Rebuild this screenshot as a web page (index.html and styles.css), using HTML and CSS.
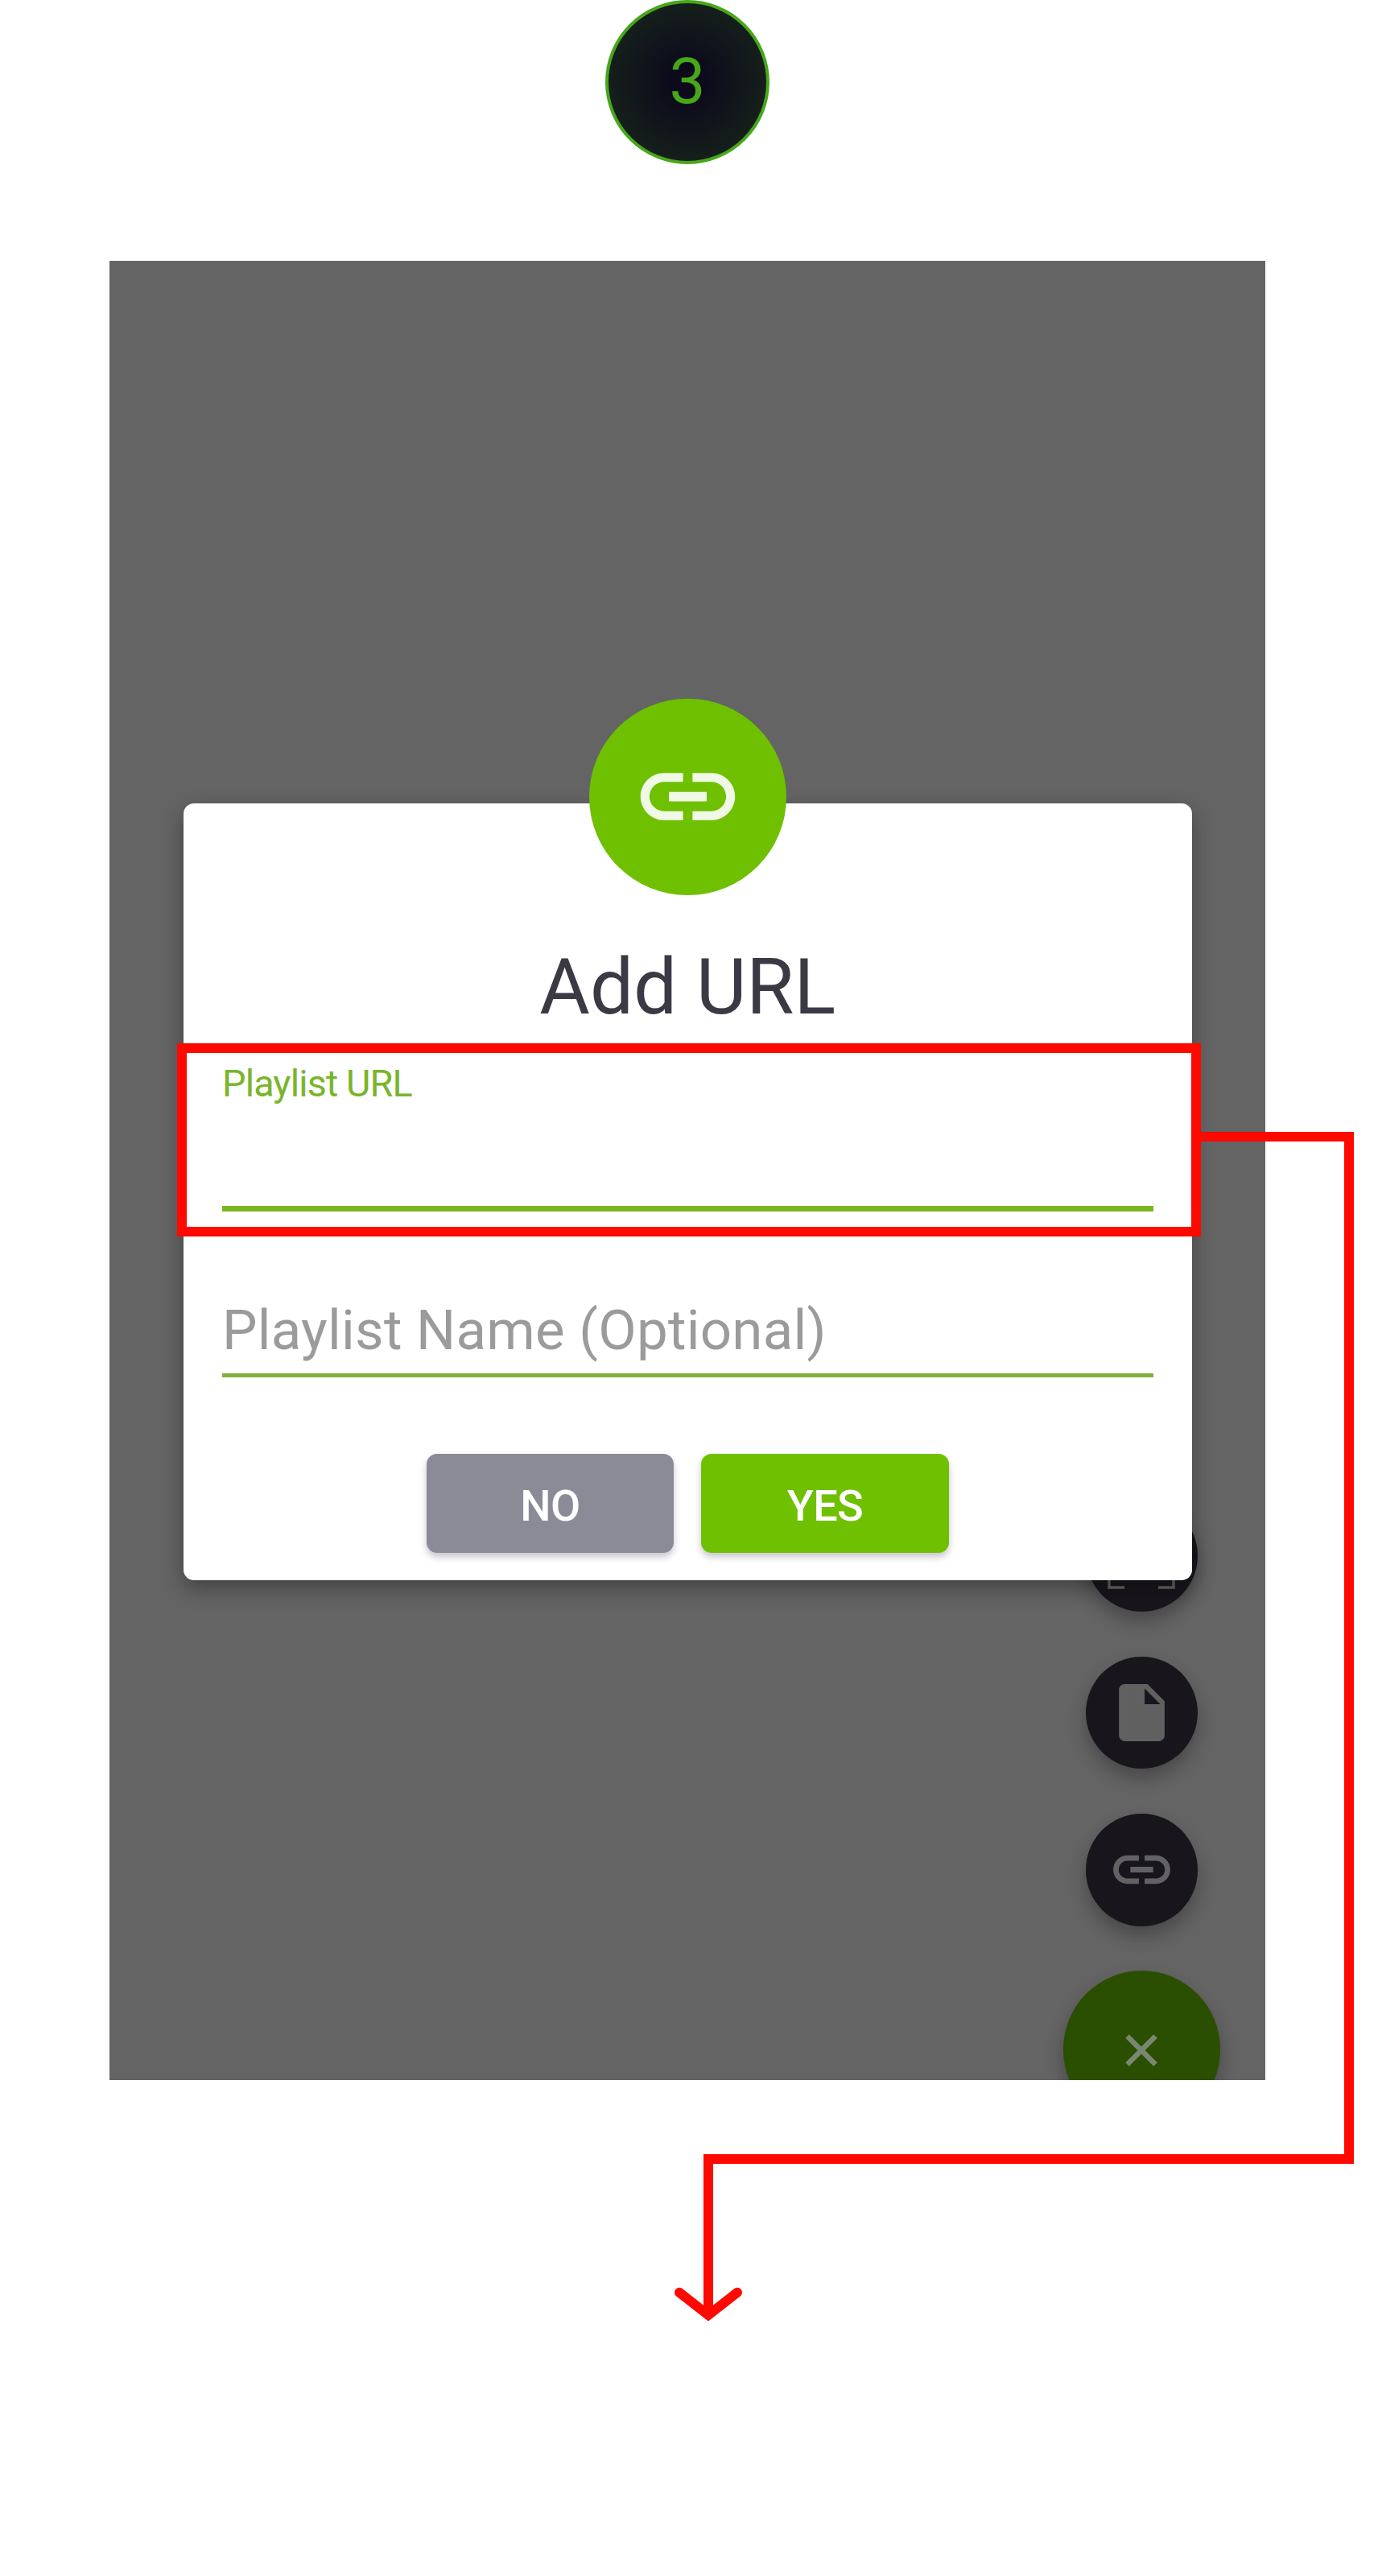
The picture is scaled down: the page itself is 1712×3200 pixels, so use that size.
FILE: index.html
```html
<!DOCTYPE html>
<html lang="en">
<head>
<meta charset="utf-8">
<title>Step 3 - Add URL</title>
<link rel="stylesheet" href="styles.css">
</head>
<body>
<main class="step">
  <div class="step-number">3</div>
  <section class="phone">
    <div class="fabs">
      <div class="fab">
        <svg width="84" height="84" viewBox="0 0 84 84" fill="none" stroke="#646464" stroke-width="3.5"><path d="M2 21V2H21M63 2H82V21M82 63V82H63M21 82H2V63"/></svg>
      </div>
      <div class="fab">
        <svg width="85" height="85" viewBox="0 0 24 24" fill="#606060"><path d="M6 2c-1.1 0-1.99.9-1.99 2L4 20c0 1.1.89 2 1.99 2H18c1.1 0 2-.9 2-2V8l-6-6H6zm7 7V3.500L18.500 9H13z"/></svg>
      </div>
      <div class="fab">
        <svg width="85" height="85" viewBox="0 0 24 24" fill="#626265"><path d="M3.900 12c0-1.710 1.390-3.100 3.100-3.100h4V7H7c-2.760 0-5 2.240-5 5s2.240 5 5 5h4v-1.900H7c-1.710 0-3.100-1.390-3.100-3.100zM8 13h8v-2H8v2zm9-6h-4v1.900h4c1.710 0 3.100 1.390 3.100 3.100s-1.390 3.100-3.100 3.100h-4V17h4c2.760 0 5-2.240 5-5s-2.240-5-5-5z"/></svg>
      </div>
      <div class="fab fab-main">
        <svg width="40" height="40" viewBox="0 0 40 40" stroke="#788672" stroke-width="6.500"><path d="M2.500 2.500 37.500 37.500M37.500 2.500 2.500 37.500"/></svg>
      </div>
    </div>
    <form class="dialog">
      <div class="dialog-icon">
        <svg width="141" height="141" viewBox="0 0 24 24" fill="#f0f9e5"><path d="M3.900 12c0-1.710 1.390-3.100 3.100-3.100h4V7H7c-2.760 0-5 2.240-5 5s2.240 5 5 5h4v-1.900H7c-1.710 0-3.100-1.390-3.100-3.100zM8 13h8v-2H8v2zm9-6h-4v1.900h4c1.710 0 3.100 1.390 3.100 3.100s-1.390 3.100-3.100 3.100h-4V17h4c2.760 0 5-2.240 5-5s-2.240-5-5-5z"/></svg>
      </div>
      <h1 class="title"><span>Add URL</span></h1>
      <div class="field field-url"><span>Playlist URL</span></div>
      <div class="field field-name"><span>Playlist Name (Optional)</span></div>
      <div class="actions">
        <button class="btn btn-no" type="button">NO</button>
        <button class="btn btn-yes" type="button">YES</button>
      </div>
    </form>
  </section>
  <svg class="callout" width="1712" height="3200" viewBox="0 0 1712 3200" fill="none" stroke="#ff0800" stroke-width="12">
    <rect x="226" y="1302" width="1260" height="228"/>
    <path d="M1486 1412H1676V2682H880V2873"/>
    <path d="M844 2847.700 880 2875.900 916 2847.700" stroke-linecap="round"/>
  </svg>
</main>
</body>
</html>
```
FILE: styles.css
```css
* { box-sizing: border-box; }

body {
  margin: 0;
  background: #fff;
  font-family: Roboto, "Liberation Sans", sans-serif;
}

.step {
  position: relative;
  height: 3200px;
  padding: 0 140px 0 136px;
  display: flex;
  flex-direction: column;
  align-items: center;
  gap: 120px;
}

.step-number {
  flex: none;
  width: 204px;
  height: 204px;
  border: 4px solid #47a71a;
  border-radius: 50%;
  background: radial-gradient(circle closest-side, #0c0a1b 20%, #151f1b 100%);
  color: #47a71a;
  font-size: 80px;
  line-height: 194px;
  text-align: center;
}

.phone {
  position: relative;
  flex: none;
  width: 1436px;
  height: 2260px;
  padding: 674px 91.500px 0 92px;
  background: #646464;
  overflow: hidden;
}

/* Speed-dial buttons float over the screen, behind the dialog */
.fabs {
  position: absolute;
  top: 1538.500px;
  right: 55.800px;
  display: flex;
  flex-direction: column;
  align-items: center;
  gap: 55.500px;
}

.fab {
  display: flex;
  align-items: center;
  justify-content: center;
  width: 139.700px;
  height: 139.700px;
  border-radius: 50%;
  background: #18161c;
  box-shadow: 0 12px 22px rgba(0, 0, 0, .28);
}

.fab-main {
  width: 195.500px;
  height: 195.500px;
  background: #2b4f00;
  padding-top: 3px;
}

.dialog {
  position: relative;
  height: 965px;
  padding: 172px 48px 34px;
  border-radius: 13px;
  background: #fff;
  box-shadow: 0 10px 26px rgba(0, 0, 0, .35);
}

.dialog-icon {
  position: absolute;
  top: -130.500px;
  left: 504px;
  display: flex;
  align-items: center;
  justify-content: center;
  width: 244.500px;
  height: 244.500px;
  border-radius: 50%;
  background: #6ec000;
}

.title {
  margin: 0;
  color: #3b3a44;
  font-size: 96px;
  font-weight: 400;
  line-height: 112px;
  text-align: center;
}

.field-url {
  height: 187px;
  margin-top: 36px;
  border-bottom: 7px solid #79b51e;
  color: #79b52b;
  font-size: 46.800px;
  letter-spacing: -.88px;
  line-height: 56px;
}

.field-name {
  height: 98px;
  margin-top: 108px;
  border-bottom: 5px solid #83b03c;
  color: #9b9b9b;
  font-size: 69px;
  letter-spacing: .25px;
  line-height: 80px;
}

.actions {
  display: flex;
  justify-content: center;
  gap: 34px;
  margin-top: 95px;
}

.btn {
  width: 307.500px;
  height: 123px;
  padding: 5px 0 0;
  border: 0;
  border-radius: 13px;
  color: #fff;
  font: 500 54px Roboto, "Liberation Sans", sans-serif;
  letter-spacing: -.6px;
  box-shadow: 0 5px 8px rgba(30, 20, 50, .25);
}

.btn-no { background: #8b8b97; }
.btn-yes { background: #6ec000; }

.callout {
  position: absolute;
  top: 0;
  left: 0;
}
```
